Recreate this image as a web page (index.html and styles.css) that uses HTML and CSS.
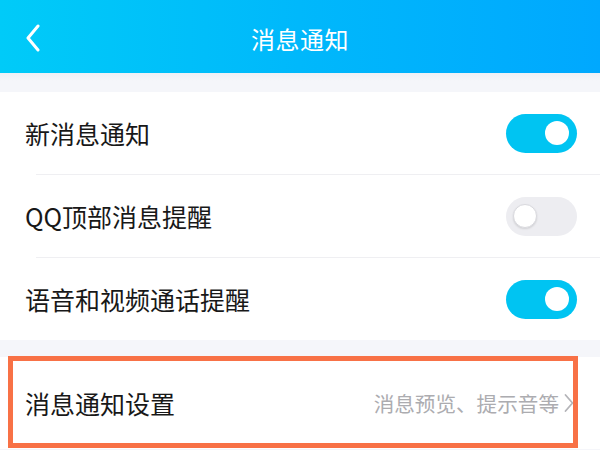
FILE: index.html
```html
<!DOCTYPE html>
<html lang="zh">
<head>
<meta charset="utf-8">
<link rel="stylesheet" href="styles.css">
</head>
<body>
<div class="page">
  <header class="header">
    <div class="back">
      <svg width="16" height="28" viewBox="0 0 16 28"><path d="M13 2 L3 14 L13 26" fill="none" stroke="#fff" stroke-width="3" stroke-linecap="round" stroke-linejoin="round"/></svg>
    </div>
    <div class="title">消息通知</div>
    <div></div>
  </header>
  <div class="band"></div>
  <section class="group">
    <div class="row">
      <span class="label">新消息通知</span>
      <span class="toggle on"><span class="knob"></span></span>
    </div>
    <div class="sep"></div>
    <div class="row">
      <span class="label">QQ顶部消息提醒</span>
      <span class="toggle off"><span class="knob"></span></span>
    </div>
    <div class="sep"></div>
    <div class="row">
      <span class="label">语音和视频通话提醒</span>
      <span class="toggle on"><span class="knob"></span></span>
    </div>
  </section>
  <div class="band band-small"></div>
  <section class="group last">
    <div class="row row-link">
      <span class="label">消息通知设置</span>
      <span class="hint">消息预览、提示音等<svg class="chev" width="10" height="20" viewBox="0 0 10 20"><path d="M1.5 2 L8.5 10 L1.5 18" fill="none" stroke="#b4b4b8" stroke-width="1.8" stroke-linecap="round" stroke-linejoin="round"/></svg></span>
    </div>
  </section>
  <div class="highlight"></div>
</div>
</body>
</html>
```
FILE: styles.css
```css
* { box-sizing: border-box; }
html, body { margin: 0; padding: 0; }
body {
  width: 600px;
  height: 450px;
  overflow: hidden;
  background: #f5f6fa;
  font-family: "Noto Sans CJK SC", "Noto Sans", sans-serif;
}
.page { position: relative; width: 600px; height: 450px; }
.header {
  height: 73px;
  display: grid;
  grid-template-columns: 1fr auto 1fr;
  align-items: center;
  background: linear-gradient(90deg, #00cbf8 0%, #00b8fb 50%, #00a8fe 100%);
  color: #fff;
}
.back { padding-left: 25px; display: flex; align-items: center; padding-top: 2px; }
.title { font-size: 24px; line-height: 1; padding-top: 4px; letter-spacing: 0.5px; }
.band { height: 19px; background: linear-gradient(#eef0f5, #f5f6fa 40%); }
.band-small { height: 17px; background: #f5f6fa; }
.group { background: #fff; }
.row {
  height: 82px;
  display: flex;
  align-items: center;
  justify-content: space-between;
  padding: 0 23px 0 25px;
}
.label { font-size: 25px; color: #181818; line-height: 1; }
.sep { height: 1px; margin-left: 36px; background: #efeff2; }
.toggle {
  width: 71px;
  height: 39px;
  border-radius: 20px;
  display: flex;
  align-items: center;
  padding: 0 8px 0 7px;
}
.toggle .knob {
  width: 24px;
  height: 24px;
  border-radius: 50%;
  background: #fff;
}
.toggle.on { background: #00c4f2; justify-content: flex-end; }
.toggle.off { background: #ededf1; justify-content: flex-start; }
.toggle.off .knob { border: 1px solid #d9d9de; box-shadow: 0 1px 2px rgba(0,0,0,0.12); }
.row-link { height: 92px; padding-right: 26px; }
.hint {
  font-size: 20.6px;
  color: #acacb0;
  display: flex;
  align-items: center;
  gap: 5px;
  line-height: 1;
}
.highlight {
  position: absolute;
  left: 8px;
  top: 356px;
  width: 570px;
  height: 92px;
  border: 5px solid #f87146;
}
```
